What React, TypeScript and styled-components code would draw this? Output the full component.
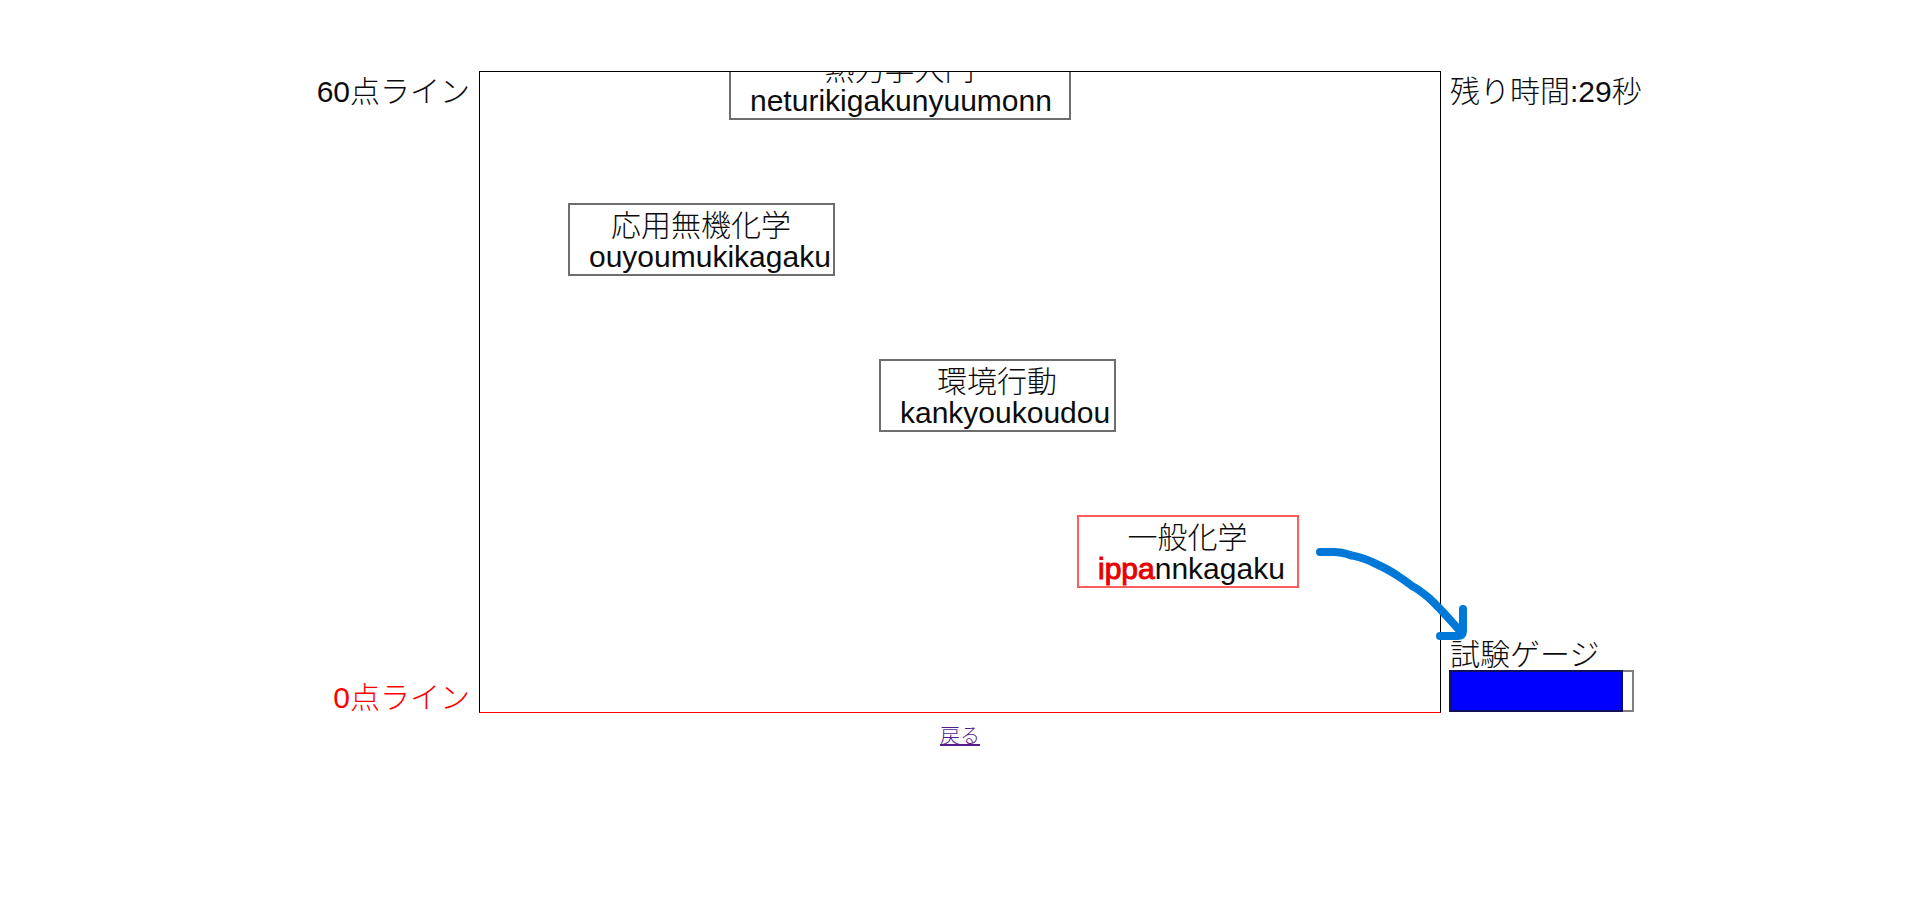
import React from "react";
import styled, { createGlobalStyle } from "styled-components";

const GlobalStyle = createGlobalStyle`
  * { box-sizing: border-box; }
  body {
    margin: 0;
    background: #fff;
    color: #0c0c0c;
    font-family: "Liberation Sans", "Noto Sans CJK JP", sans-serif;
    font-weight: 300;
    font-size: 30px;
    line-height: 30px;
  }
`;

const Page = styled.main`
  display: flex;
  flex-direction: column;
  align-items: stretch;
  gap: 8px;
  padding-top: 71px;
`;

const Stage = styled.div`
  display: grid;
  grid-template-columns: 1fr minmax(0, 962px) 1fr;
`;

const Side = styled.div<{ $align: "start" | "end" }>`
  display: flex;
  flex-direction: column;
  justify-content: space-between;
  align-items: flex-${(p) => p.$align};
  padding: 6px 8px 0;
  white-space: nowrap;
`;

const Label = styled.div<{ $danger?: boolean }>`
  padding: 0 1px;
  color: ${(p) => (p.$danger ? "#f00" : "inherit")};
`;

const Field = styled.section`
  position: relative;
  overflow: hidden;
  aspect-ratio: 962 / 642;
  border: 1px solid #000;
  border-bottom-color: #f00;
`;

const WordCard = styled.div<{ $active?: boolean }>`
  position: absolute;
  height: 73px;
  padding: 5px 0 0 19px;
  border: 2px solid ${(p) => (p.$active ? "#ff5c5c" : "#6e6e6e")};
  line-height: 31px;
  white-space: nowrap;
`;

const Title = styled.div`
  margin-left: -20px;
  text-align: center;
`;

const Typed = styled.span`
  color: #e80000;
  -webkit-text-stroke: 1px #e80000;
`;

const GaugeBlock = styled.div`
  display: flex;
  flex-direction: column;
`;

const Gauge = styled.div`
  width: 185px;
  height: 42px;
  margin-bottom: 1px;
  border: 2px solid #7f7f7f;
`;

const GaugeFill = styled.div`
  height: 42px;
  margin: -2px 0 0 -2px;
  background: #00f;
  border: 2px solid #11115a;
`;

const Arrow = styled.svg`
  position: absolute;
  left: calc(50% + 350px);
  top: 540px;
  width: 130px;
  height: 110px;
  overflow: visible;
  pointer-events: none;
`;

const Back = styled.a`
  align-self: center;
  font-size: 20px;
  color: #551a8b;
  text-decoration: underline;
`;

const words = [
  { title: "熱力学入門", typed: "", rest: "neturikigakunyuumonn", x: 249, y: -25, width: 342 },
  { title: "応用無機化学", typed: "", rest: "ouyoumukikagaku", x: 88, y: 131, width: 267 },
  { title: "環境行動", typed: "", rest: "kankyoukoudou", x: 399, y: 287, width: 237 },
  { title: "一般化学", typed: "ippa", rest: "nnkagaku", x: 597, y: 443, width: 222 },
];

export default function App() {
  const gauge = 174;
  return (
    <>
      <GlobalStyle />
      <Page>
        <Stage>
          <Side $align="end">
            <Label>60点ライン</Label>
            <Label $danger>0点ライン</Label>
          </Side>
          <Field>
            {words.map((w) => (
              <WordCard
                key={w.rest}
                $active={w.typed !== ""}
                style={{ left: w.x, top: w.y, width: w.width }}
              >
                <Title>{w.title}</Title>
                <Typed>{w.typed}</Typed>
                {w.rest}
              </WordCard>
            ))}
          </Field>
          <Side $align="start">
            <Label>残り時間:29秒</Label>
            <GaugeBlock>
              <Label id="gauge-label">試験ゲージ</Label>
              <Gauge
                role="meter"
                aria-labelledby="gauge-label"
                aria-valuemin={0}
                aria-valuemax={185}
                aria-valuenow={gauge}
              >
                <GaugeFill style={{ width: gauge }} />
              </Gauge>
            </GaugeBlock>
          </Side>
        </Stage>
        <Back href="#">戻る</Back>
      </Page>
      <Arrow viewBox="0 0 130 110" aria-hidden="true">
        <g fill="none" stroke="#0078d7" strokeWidth="8" strokeLinecap="round" strokeLinejoin="round">
          <path d="M10 12H24C31 12 34 13 40 15C48 17 54 18 62 22C73 27 81 31 88 36C94 40 97 42 102 46C108 49 113 53 119 58C131 69 141 81 151 92" />
          <path d="M153 69V91Q153 96 147 96H130" />
        </g>
      </Arrow>
    </>
  );
}
